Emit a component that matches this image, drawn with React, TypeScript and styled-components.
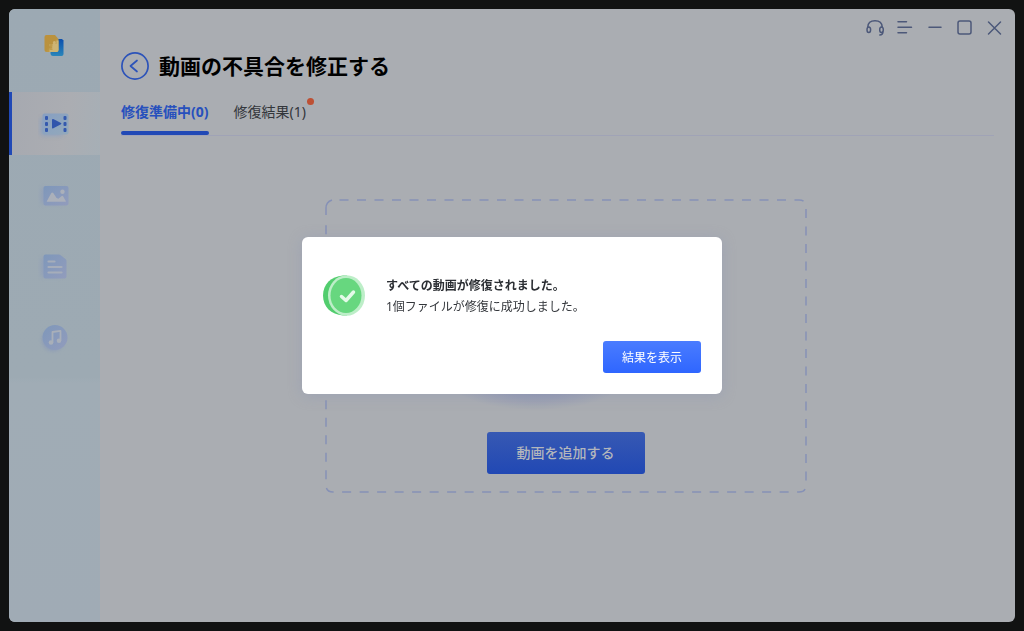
import React from "react";
import styled, { createGlobalStyle } from "styled-components";

const GlobalStyle = createGlobalStyle`
  * { box-sizing: border-box; }
  body {
    margin: 0;
    background: #111212;
    font-family: "Noto Sans", "Noto Sans CJK JP", sans-serif;
    color: #2b2e33;
  }
  button { font-family: inherit; cursor: pointer; }
  svg { display: block; }
`;

const Desktop = styled.div`
  min-height: 100vh;
  padding: 9px;
  display: flex;
`;

const AppWindow = styled.div`
  flex: 1;
  display: flex;
  background: #aaadb2;
  border-radius: 6px;
  overflow: hidden;
`;

const Sidebar = styled.nav`
  width: 91px;
  flex: none;
  display: flex;
  flex-direction: column;
  gap: 8px;
  background: linear-gradient(180deg, #9ca9b3 0%, #9daab3 60%, #a0acb5 61%, #a0abb5 100%);
`;

const LogoArea = styled.div`
  height: 75px;
  padding: 24px 0 0 34px;
`;

const NavButton = styled.button<{ $active?: boolean }>`
  height: 63px;
  padding: 0;
  border: 0;
  border-left: 3px solid ${(p) => (p.$active ? "#2149b6" : "transparent")};
  background: ${(p) =>
    p.$active ? "linear-gradient(100deg, #a6a9b0 0%, #abadb2 60%, #a6afb6 100%)" : "transparent"};
  display: flex;
  align-items: center;
  justify-content: center;
`;

const Main = styled.main`
  flex: 1;
  min-width: 0;
  display: flex;
  flex-direction: column;
  padding: 9px 21px 0;
`;

const WindowControls = styled.div`
  display: flex;
  justify-content: flex-end;
  gap: 10px;
  margin-right: -11px;
`;

const ControlButton = styled.button`
  width: 20px;
  height: 20px;
  padding: 0;
  border: 0;
  background: transparent;
  color: #4c5879;
`;

const Header = styled.header`
  display: flex;
  align-items: center;
  gap: 10px;
  margin-top: 14px;
`;

const BackButton = styled.button`
  width: 28px;
  height: 28px;
  padding: 0;
  border: 0;
  background: transparent;
`;

const Title = styled.h1`
  margin: 0;
  font-size: 21px;
  line-height: 28px;
  font-weight: 700;
  color: #000;
`;

const Tabs = styled.div`
  display: flex;
  gap: 25px;
  margin-top: 20px;
  border-bottom: 1px solid #a0a3b6;
`;

const Tab = styled.button<{ $active?: boolean }>`
  position: relative;
  height: 35px;
  padding: 0 0 11px;
  border: 0;
  background: transparent;
  font-size: 14px;
  line-height: 24px;
  font-weight: ${(p) => (p.$active ? 700 : 400)};
  color: ${(p) => (p.$active ? "#2750bd" : "#33363b")};
  &::after {
    content: "";
    display: ${(p) => (p.$active ? "block" : "none")};
    position: absolute;
    left: 0;
    right: 0;
    bottom: 0;
    height: 4px;
    border-radius: 2px;
    background: #2149b6;
  }
`;

const Badge = styled.span`
  position: absolute;
  top: -2px;
  right: -8px;
  width: 7px;
  height: 7px;
  border-radius: 50%;
  background: #bd5034;
`;

const DropSection = styled.section`
  display: flex;
  justify-content: center;
  padding: 63px 0 0 16px;
`;

const DropZone = styled.div`
  position: relative;
  width: 100%;
  max-width: 482px;
  height: 294px;
  display: flex;
  flex-direction: column;
  align-items: center;
  justify-content: flex-end;
  gap: 22px;
  padding-bottom: 19px;
`;

const DashedOutline = styled.svg`
  position: absolute;
  inset: 0;
  width: 100%;
  height: 100%;
`;

const Glow = styled.div`
  width: 180px;
  height: 64px;
  margin-right: 60px;
  background: radial-gradient(closest-side, #7d84b0 0%, #8f95b1 45%, #aaadb200 100%);
`;

const AddButton = styled.button`
  position: relative;
  width: 158px;
  height: 42px;
  border: 0;
  border-radius: 3px;
  background: linear-gradient(180deg, #3759b3, #2148b4);
  color: #b3b6bc;
  font-size: 14px;
  font-weight: 500;
  line-height: 20px;
`;

const Overlay = styled.div`
  position: fixed;
  inset: 0;
  display: flex;
  align-items: center;
  justify-content: center;
`;

const Dialog = styled.div`
  width: 420px;
  padding: 38px 21px 21px;
  display: flex;
  flex-direction: column;
  align-items: flex-end;
  gap: 24px;
  background: #fff;
  border-radius: 6px;
  box-shadow: 0 2px 14px #8d95b577;
`;

const Message = styled.div`
  width: 100%;
  display: flex;
  align-items: center;
  gap: 21px;
`;

const DialogTitle = styled.h2`
  margin: 0;
  font-size: 12px;
  line-height: 22px;
  font-weight: 700;
  color: #2b2e33;
`;

const DialogText = styled.p`
  margin: 0;
  font-size: 12px;
  line-height: 20px;
  color: #33363b;
`;

const PrimaryButton = styled.button`
  width: 98px;
  height: 32px;
  padding: 2px 0 0;
  border: 0;
  border-radius: 3px;
  background: linear-gradient(180deg, #4a7cff, #2f66ff);
  color: #fff;
  font-size: 12px;
  line-height: 20px;
`;

const Logo = () => (
  <svg width="24" height="26" viewBox="0 0 24 26" aria-hidden="true">
    <defs>
      <linearGradient id="gold" x1="0" y1="0" x2="1" y2="1">
        <stop offset="0" stopColor="#bd913b" />
        <stop offset="0.5" stopColor="#b9923f" />
        <stop offset="1" stopColor="#c8ac62" />
      </linearGradient>
      <linearGradient id="blue" x1="0" y1="0" x2="0" y2="1">
        <stop offset="0" stopColor="#0b4fae" />
        <stop offset="1" stopColor="#2a86ba" />
      </linearGradient>
    </defs>
    <path d="M8 6h11l1.500 1.500V21q0 2-2 2H10q-2.500 0-2.500-3z" fill="url(#blue)" />
    <path d="M3.500 2H12l3.500 4v11q0 2-2 2H3.500q-2 0-2-2V4q0-2 2-2z" fill="url(#gold)" />
    <path
      d="M15.500 7.500v9.500q0 2-2 2H6.500v-3.500q1.300.8 2.300 0 1.200-1.200 0-2.300-1-.8-2.300 0V11h3.700q-.8-1.400 0-2.400 1.200-1 2.300 0 .8 1 0 2.400h1V7.500z"
      fill="#cdb474"
    />
    <path d="M6.500 11h3v2.500h-3zM6.500 15.500h3V17h-3z" fill="#bf9c4c" />
  </svg>
);

const VideoIcon = () => (
  <svg width="36" height="34" viewBox="0 0 36 34" aria-hidden="true">
    <defs>
      <linearGradient id="film" x1="0" y1="0" x2="1" y2="1">
        <stop offset="0" stopColor="#879fc2" />
        <stop offset="1" stopColor="#93a9bb" />
      </linearGradient>
      <filter id="filmShadow" x="-40%" y="-40%" width="180%" height="180%">
        <feGaussianBlur stdDeviation="2.500" />
      </filter>
    </defs>
    <rect x="3" y="11" width="22" height="17" rx="3" fill="#7f9bc6" opacity=".8" filter="url(#filmShadow)" />
    <rect x="4.500" y="6.500" width="26" height="21" rx="2" fill="url(#film)" />
    {[9, 15, 21].map((y) => (
      <g key={y} fill="#3459ae">
        <rect x="7" y={y} width="3" height="4" rx="1" />
        <rect x="25.500" y={y} width="3" height="4" rx="1" />
      </g>
    ))}
    <path d="M14 13q0-1.500 1.300-.9l7.700 4q.9.600 0 1.200l-7.700 4q-1.300.6-1.300-.9z" fill="#3155ac" />
  </svg>
);

const SoftDefs = () => (
  <defs>
    <linearGradient id="soft" x1="0" y1="0" x2="1" y2="1">
      <stop offset="0" stopColor="#7e97ba" />
      <stop offset="1" stopColor="#929cbc" />
    </linearGradient>
    <filter id="softShadow" x="-40%" y="-40%" width="180%" height="180%">
      <feGaussianBlur stdDeviation="2" />
    </filter>
  </defs>
);

const ImageIcon = () => (
  <svg width="36" height="34" viewBox="0 0 36 34" aria-hidden="true">
    <SoftDefs />
    <rect x="3" y="10" width="22" height="16" rx="3" fill="#8a99bd" opacity=".6" filter="url(#softShadow)" />
    <rect x="5.500" y="8" width="25" height="19.500" rx="2" fill="url(#soft)" />
    <circle cx="24.500" cy="13.700" r="2.200" fill="#abb0ba" />
    <path
      d="M8.800 23.300l4.500-8.300q1-1.200 2 0l3.300 5 1.800.8 3-2.600q1-.8 1.800.3l2.700 4.800q-.1.500-.9.500H9.500q-.9 0-.7-.5z"
      fill="#abb0ba"
    />
  </svg>
);

const DocIcon = () => (
  <svg width="36" height="34" viewBox="0 0 36 34" aria-hidden="true">
    <rect x="3" y="9" width="20" height="19" rx="3" fill="#8a99bd" opacity=".6" filter="url(#softShadow)" />
    <path d="M7.500 5.500H20.500Q22 5.500 23 6.500l4.500 3.500q1 1 1 2V27.500q0 2-2 2h-19q-2 0-2-2V7.500q0-2 2-2z" fill="url(#soft)" />
    <path d="M10.500 12.500h6M10.500 18h13M10.500 23.500h13" stroke="#a6adba" strokeWidth="2.200" strokeLinecap="round" />
  </svg>
);

const MusicIcon = () => (
  <svg width="36" height="34" viewBox="0 0 36 34" aria-hidden="true">
    <circle cx="15" cy="20" r="10.500" fill="#8091bb" opacity=".7" filter="url(#softShadow)" />
    <circle cx="17" cy="17.500" r="12.500" fill="url(#soft)" />
    <path d="M14.500 22.500v-10.500l8-1.200v9.700" fill="none" stroke="#a9afb9" strokeWidth="1.800" strokeLinejoin="round" />
    <circle cx="13" cy="22.500" r="2.300" fill="#a9afb9" />
    <circle cx="21" cy="20.800" r="2.300" fill="#a9afb9" />
  </svg>
);

const ControlIcon = ({ children }: { children: React.ReactNode }) => (
  <svg
    width="20"
    height="20"
    viewBox="0 0 20 20"
    fill="none"
    stroke="currentColor"
    strokeWidth="1.500"
    strokeLinecap="round"
    aria-hidden="true"
  >
    {children}
  </svg>
);

const controls = [
  {
    label: "サポート",
    icon: (
      <>
        <path d="M2.800 9C3 4.800 6 2.800 10 2.800S17 4.800 17.200 9M17.800 14c0 1.800-.8 3-3 3" />
        <ellipse cx="3.800" cy="11.800" rx="1.800" ry="2.800" />
        <ellipse cx="16.500" cy="11.800" rx="1.800" ry="2.800" />
      </>
    ),
  },
  { label: "メニュー", icon: <path d="M3 3.800h8.500M3 9.300h13.500M3 14.700h8.500" /> },
  { label: "最小化", icon: <path d="M4 9.300h12" /> },
  { label: "最大化", icon: <rect x="3" y="3" width="13" height="13" rx="2" /> },
  { label: "閉じる", icon: <path d="M3.500 4l12 12M15.500 4l-12 12" /> },
];

const navItems = [
  { label: "動画", icon: <VideoIcon />, active: true },
  { label: "写真", icon: <ImageIcon /> },
  { label: "ドキュメント", icon: <DocIcon /> },
  { label: "音楽", icon: <MusicIcon /> },
];

const SuccessIcon = () => (
  <svg width="42" height="42" viewBox="0 0 42 42" aria-hidden="true">
    <path d="M20 .5h4v40h-4C8 39.500 0 32 0 20.500S8 1.500 20 .5z" fill="#52cd6e" />
    <ellipse cx="23.500" cy="20.500" rx="18.500" ry="20.200" fill="#bdeec8" />
    <ellipse cx="23" cy="20.500" rx="15.500" ry="17.500" fill="#67d77f" />
    <path
      d="M18.500 21.500l4.500 4 7.500-8.500"
      fill="none"
      stroke="#e4fae9"
      strokeWidth="3.500"
      strokeLinecap="round"
      strokeLinejoin="round"
    />
  </svg>
);

export default function App() {
  return (
    <>
      <GlobalStyle />
      <Desktop>
        <AppWindow>
          <Sidebar>
            <LogoArea>
              <Logo />
            </LogoArea>
            {navItems.map((n) => (
              <NavButton key={n.label} $active={n.active} aria-label={n.label}>
                {n.icon}
              </NavButton>
            ))}
          </Sidebar>
          <Main>
            <WindowControls>
              {controls.map((c) => (
                <ControlButton key={c.label} aria-label={c.label}>
                  <ControlIcon>{c.icon}</ControlIcon>
                </ControlButton>
              ))}
            </WindowControls>
            <Header>
              <BackButton aria-label="戻る">
                <svg width="28" height="28" viewBox="0 0 28 28" fill="none" stroke="#2c53b9" strokeWidth="1.700">
                  <circle cx="14" cy="14" r="13.100" />
                  <path d="M16 8.500L9.500 14l6.500 5.500" strokeLinecap="round" strokeLinejoin="round" />
                </svg>
              </BackButton>
              <Title>動画の不具合を修正する</Title>
            </Header>
            <Tabs role="tablist">
              <Tab role="tab" aria-selected="true" $active>
                修復準備中(0)
              </Tab>
              <Tab role="tab" aria-selected="false">
                修復結果(1)
                <Badge />
              </Tab>
            </Tabs>
            <DropSection>
              <DropZone>
                <DashedOutline
                  viewBox="0 0 482 294"
                  preserveAspectRatio="none"
                  fill="none"
                  stroke="#8691b6"
                  strokeWidth="1.500"
                  aria-hidden="true"
                >
                  <path
                    d="M14.500 1H474q7 0 7 7V286q0 7-7 7H8q-7 0-7-7V24"
                    strokeDasharray="9 8.500"
                  />
                  <path d="M1 16V9q0-6 6-8" />
                </DashedOutline>
                <Glow />
                <AddButton>動画を追加する</AddButton>
              </DropZone>
            </DropSection>
          </Main>
        </AppWindow>
      </Desktop>
      <Overlay>
        <Dialog role="dialog" aria-modal="true" aria-labelledby="dialog-title">
          <Message>
            <SuccessIcon />
            <div>
              <DialogTitle id="dialog-title">すべての動画が修復されました。</DialogTitle>
              <DialogText>1個ファイルが修復に成功しました。</DialogText>
            </div>
          </Message>
          <PrimaryButton>結果を表示</PrimaryButton>
        </Dialog>
      </Overlay>
    </>
  );
}
